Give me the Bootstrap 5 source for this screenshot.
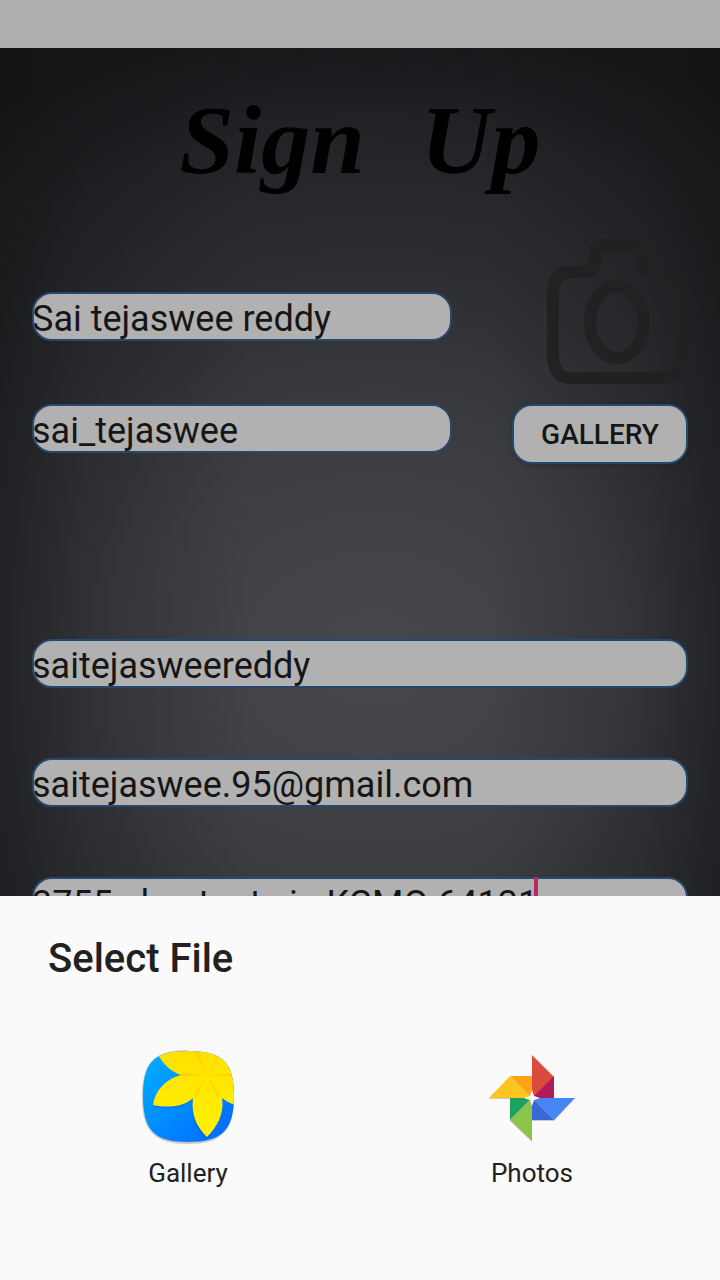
<!DOCTYPE html>
<html lang="en">
<head>
<meta charset="utf-8">
<meta name="viewport" content="width=device-width, initial-scale=1">
<title>Sign Up</title>
<link href="https://cdn.jsdelivr.net/npm/bootstrap@5.3.0/dist/css/bootstrap.min.css" rel="stylesheet">
<style>
  body { font-family: Roboto, sans-serif; color: #212121; background: #fafafa; }
  .status-strip { height: 48px; background: #aeaeae; }
  .signup {
    background:
      linear-gradient(90deg, rgba(18, 18, 20, .55) 0%, rgba(18, 18, 20, .25) 12%, rgba(18, 18, 20, 0) 35%, rgba(18, 18, 20, 0) 68%, rgba(18, 18, 20, .25) 89%, rgba(18, 18, 20, .55) 100%),
      radial-gradient(ellipse 110% 74% at 52% 72%, #47484c 0%, #3e3f43 32%, #2d2e32 62%, #222326 84%, #161719 100%);
    padding: 0 32px;
  }
  .brand-title { font: italic bold 98px/120px "Liberation Serif", serif; color: #000; gap: 56px; padding-top: 32px; height: 188px; }
  .field { height: 49px; border: 2px solid #24486e; border-radius: 20px; background: #b1b1b1; color: #161616; font-size: 36px; line-height: 44px; padding: 4px 0 0; text-indent: -2px; }
  .field:focus { background: #b1b1b1; color: #161616; border-color: #24486e; box-shadow: none; }
  .names { width: 420px; padding-top: 56px; gap: 63px; }
  .avatar { width: 176px; gap: 20px; }
  .btn-pick { height: 60px; width: 100%; border: 2px solid #24486e; border-radius: 20px; background: #b1b1b1; color: #161616; font-size: 28px; font-weight: 500; padding: 2px 0 0; box-shadow: 0 1px 4px rgba(0, 0, 0, .2); }
  .details { margin-top: 175px; gap: 70px; }
  .clipped { height: 19px; overflow: hidden; }
  .caret { left: 502px; top: 0; width: 4px; height: 19px; background: #b52a58; }
  .sheet { padding: 32px 16px 84px; }
  .sheet-title { font-size: 40px; font-weight: 500; line-height: 62px; padding-left: 32px; }
  .app { font-size: 26px; line-height: 32px; color: #212121; gap: 13px; padding-top: 58px; }
</style>
</head>
<body>
<main>
  <div class="status-strip"></div>
  <form class="signup d-flex flex-column overflow-hidden">
    <h1 class="brand-title d-flex justify-content-center m-0"><span>Sign</span><span>Up</span></h1>
    <div class="d-flex justify-content-between">
      <div class="names d-flex flex-column">
        <input class="field form-control" aria-label="Full name" value="Sai tejaswee reddy">
        <input class="field form-control" aria-label="Nickname" value="sai_tejaswee">
      </div>
      <div class="avatar d-flex flex-column align-items-end">
        <svg width="142" height="148" viewBox="0 0 142 148" fill="none" stroke="#212121" aria-hidden="true">
          <path stroke-width="12" d="M22 36H40Q47 36 48 29L50 13Q51 9 57 9H87Q93 9 94 13L96 29Q97 36 104 36H119Q135 38 136 56V120Q133 141 119 142H22Q8 140 7 120V56Q8 38 22 36Z"/>
          <ellipse stroke-width="12" cx="71" cy="86" rx="27" ry="36"/>
        </svg>
        <button type="button" class="btn-pick">GALLERY</button>
      </div>
    </div>
    <div class="details d-flex flex-column">
      <input class="field form-control" aria-label="User name" value="saitejasweereddy">
      <input class="field form-control" type="email" aria-label="Email" value="saitejaswee.95@gmail.com">
      <div class="clipped position-relative">
        <input class="field form-control" aria-label="Address" value="3755 chestnut sin KCMO 64131">
        <span class="caret position-absolute"></span>
      </div>
    </div>
  </form>
  <section class="sheet">
    <h2 class="sheet-title m-0">Select File</h2>
    <div class="row g-0">
      <a href="#" class="app col-6 d-flex flex-column align-items-center text-decoration-none">
        <svg width="96" height="96" viewBox="0 0 96 96" aria-hidden="true">
          <defs>
            <linearGradient id="sky" x1="0" y1="0" x2="1" y2="1"><stop offset="0" stop-color="#00b4ff"/><stop offset="1" stop-color="#0064ff"/></linearGradient>
            <linearGradient id="petal" x1="0" y1="0" x2="0" y2="1"><stop offset="0" stop-color="#ffe000"/><stop offset="1" stop-color="#fff200"/></linearGradient>
            <clipPath id="tile"><path d="M48 3C82 3 94 14 94 48S82 94 48 94 3 82 3 48 14 3 48 3Z"/></clipPath>
          </defs>
          <path d="M48 4C82 4 94 15 94 49S82 96 48 96 2 83 2 49 14 2 48 2Z" fill="#999" opacity=".5"/>
          <g clip-path="url(#tile)">
            <path d="M0 0H96V96H0Z" fill="url(#sky)"/>
            <g fill="#004bd0" opacity=".25" transform="translate(-1 2)"><path d="M13 57C32 61 46 57 53 50L53 30Z"/><path d="M53 50C51 66 56 78 67 90 80 76 84 62 82 50Z"/></g>
            <path fill="url(#petal)" d="M18 0V7C24 17 32 24 41 27 26 31 15 42 13 57 32 61 46 57 53 50 51 66 56 78 67 89 80 76 84 62 82 50 87 54 92 56 96 57V0Z"/>
            <g fill="#ffc400" opacity=".6"><path d="M67 27 40 25v3ZM67 27 96 25v3ZM67 27 54 3l3-1ZM67 27 77 7l2 1ZM67 27 54 48l2 2ZM67 27 80 48l-2 2Z"/></g>
          </g>
        </svg>
        <span>Gallery</span>
      </a>
      <a href="#" class="app col-6 d-flex flex-column align-items-center text-decoration-none">
        <svg width="96" height="96" viewBox="0 0 96 96" aria-hidden="true">
          <path fill="#999" opacity=".5" d="M5 51 26 30H48V9L70 30V51H90L70 73H48V94L26 73V51Z"/>
          <path fill="#db4a3e" d="M48 7 70 29 48 51Z"/><path fill="#b01c5b" d="M70 28V50H48Z"/>
          <path fill="#ffa216" d="M26 28H48V50Z"/><path fill="#fec61c" d="M5 50 26 28 48 50Z"/>
          <path fill="#4586f4" d="M48 50H91L70 72Z"/><path fill="#3a69d7" d="M48 50 70 72H48Z"/>
          <path fill="#1aa25f" d="M26 50H48L26 72Z"/><path fill="#8dc44c" d="M48 50V93L26 72Z"/>
          <path fill="#fff" d="M48 42 50 48 56 50 50 52 48 58 46 52 40 50 46 48Z"/>
        </svg>
        <span>Photos</span>
      </a>
    </div>
  </section>
</main>
<script src="https://cdn.jsdelivr.net/npm/bootstrap@5.3.0/dist/js/bootstrap.bundle.min.js"></script>
</body>
</html>
